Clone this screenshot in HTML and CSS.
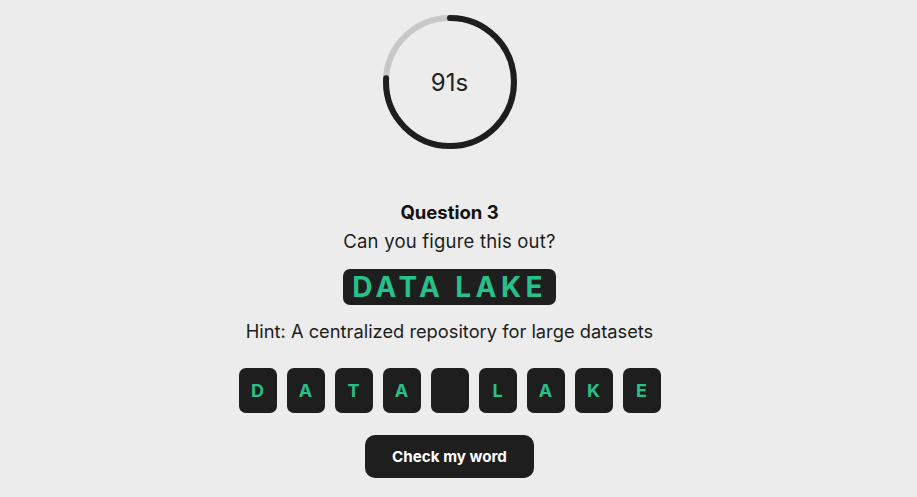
FILE: index.html
```html
<!DOCTYPE html>
<html>
<head>
<meta charset="utf-8">
<link rel="stylesheet" href="styles.css">
</head>
<body>
<main class="game">
  <div class="timer">
    <svg class="ring" width="134" height="134" viewBox="0 0 134 134">
      <circle cx="67" cy="67" r="64" class="track"/>
      <circle cx="67" cy="67" r="64" class="progress" transform="rotate(-90 67 67)"/>
    </svg>
    <span class="time">91s</span>
  </div>
  <h2 class="question">Question 3</h2>
  <p class="prompt">Can you figure this out?</p>
  <div class="word">DATA LAKE</div>
  <p class="hint">Hint: A centralized repository for large datasets</p>
  <div class="tiles">
    <span class="tile">D</span>
    <span class="tile">A</span>
    <span class="tile">T</span>
    <span class="tile">A</span>
    <span class="tile"></span>
    <span class="tile">L</span>
    <span class="tile">A</span>
    <span class="tile">K</span>
    <span class="tile">E</span>
  </div>
  <button class="check">Check my word</button>
</main>
</body>
</html>
```
FILE: styles.css
```css
html, body {
  margin: 0;
  padding: 0;
  background: #ececec;
  font-family: Inter, "Noto Sans", sans-serif;
  color: #1c1c1c;
}
.game {
  display: flex;
  flex-direction: column;
  align-items: center;
  padding-top: 15px;
  margin-right: 18px;
}
.timer {
  position: relative;
  width: 134px;
  height: 134px;
}
.ring {
  display: block;
}
.track {
  fill: none;
  stroke: #c8c8c8;
  stroke-width: 6;
}
.progress {
  fill: none;
  stroke: #1e1e1e;
  stroke-width: 6;
  stroke-linecap: round;
  stroke-dasharray: 305 402.1;
}
.time {
  position: absolute;
  inset: 0;
  display: flex;
  align-items: center;
  justify-content: center;
  font-size: 24px;
  color: #222;
}
.question {
  margin: 51px 0 0;
  font-size: 18.5px;
  line-height: 24px;
  font-weight: 700;
  color: #111;
}
.prompt {
  margin: 5px 0 0;
  font-size: 18.5px;
  letter-spacing: 0.2px;
  line-height: 24px;
}
.word {
  margin-top: 16px;
  height: 36px;
  padding: 0 9px 0 9px;
  background: #1e1e1e;
  border-radius: 7px;
  color: #26c08a;
  font-size: 28px;
  font-weight: 700;
  letter-spacing: 4.4px;
  line-height: 36px;
  box-sizing: border-box;
}
.hint {
  margin: 14px 0 0;
  font-size: 18.3px;
  line-height: 24px;
}
.tiles {
  margin-top: 25px;
  display: flex;
  gap: 10px;
}
.tile {
  width: 38px;
  height: 45px;
  border-radius: 7px;
  background: #1e1e1e;
  color: #26c08a;
  font-size: 18px;
  font-weight: 700;
  display: flex;
  align-items: center;
  justify-content: center;
}
.check {
  margin-top: 22px;
  width: 169px;
  height: 43px;
  border: none;
  border-radius: 10px;
  background: #1e1e1e;
  color: #fff;
  font-family: Inter, "Noto Sans", sans-serif;
  font-size: 15.2px;
  font-weight: 700;
}
```
